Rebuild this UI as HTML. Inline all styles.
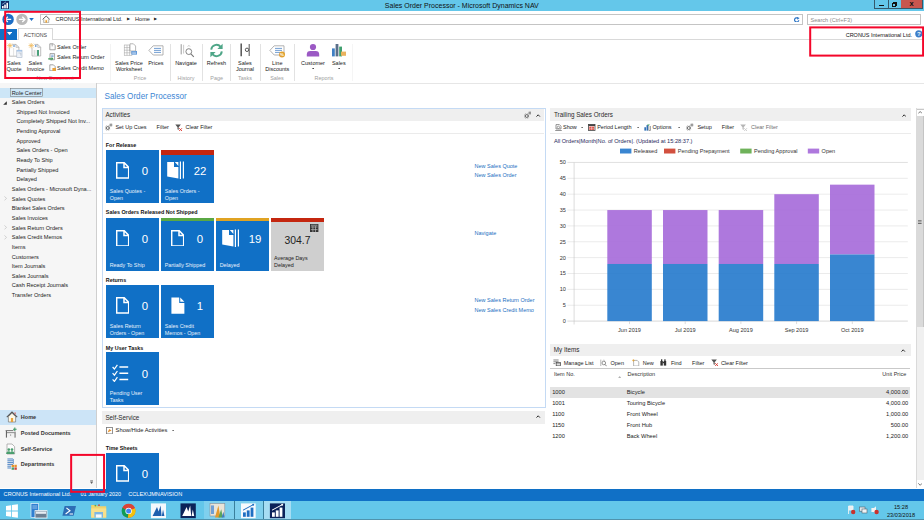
<!DOCTYPE html>
<html><head><meta charset="utf-8"><title>Sales Order Processor - Microsoft Dynamics NAV</title>
<style>
*{box-sizing:border-box;margin:0;padding:0}
html,body{width:924px;height:520px;overflow:hidden;background:#fff}
body{position:relative;font-family:"Liberation Sans",sans-serif;font-size:5.6px;color:#222;line-height:1}
.a{position:absolute;white-space:nowrap}
.t{position:absolute;white-space:nowrap;line-height:1}
#titlebar{left:0;top:0;width:924px;height:10.5px;background:#64c7ea}
#status{left:0;top:488.5px;width:924px;height:12.5px;background:#1070c6;color:#fff}
#taskbar{left:0;top:500.5px;width:924px;height:19.5px;background:#64c7ea}
#nav{left:0;top:83.4px;width:96.9px;height:405.1px;background:#f6f6f6;border-right:1px solid #cfcfcf}
.nr{position:absolute;left:0;width:96px;height:9.6px;line-height:9.6px;white-space:nowrap;color:#222;font-size:5.6px}
.tile{position:absolute;width:52.9px;height:52.9px;background:#1070c6;color:#fff}
.tile .n{position:absolute;left:28px;top:13px;width:20px;text-align:left;font-size:11.5px;color:#fff}
.tile .l{position:absolute;left:3.7px;bottom:0.6px;font-size:5.4px;line-height:7px;color:#e8f1fb;white-space:nowrap}
.tile .bar{position:absolute;left:0;top:0;width:100%;height:4.4px}
.gl{position:absolute;font-weight:bold;font-size:5.4px;color:#111;white-space:nowrap}
.ph{position:absolute;height:11px;background:#efefef;font-size:6.3px;line-height:11px;padding-left:3.5px;color:#2a2a2a;white-space:nowrap}
.lnk{position:absolute;font-size:5.5px;color:#1b6ec2;white-space:nowrap}
.rb{position:absolute;font-size:5.5px;color:#222;text-align:center;white-space:nowrap;line-height:6px}
.rg{position:absolute;font-size:5.4px;color:#a0a0a0;text-align:center;white-space:nowrap}
.sep{position:absolute;width:1px;background:#e2e2e2;top:44px;height:37px}
.tb{position:absolute;font-size:5.5px;color:#222;white-space:nowrap}
</style></head><body>

<!-- title bar -->
<div class="a" id="titlebar"></div>
<svg class="a" style="left:1px;top:1px;width:8px;height:8px" viewBox="0 0 8 8"><rect width="8" height="8" fill="#0f2c66"/><rect x="1" y="5" width="1.6" height="2.4" fill="#fff"/><rect x="3.2" y="3.6" width="1.6" height="3.8" fill="#fff"/><rect x="5.4" y="1.8" width="1.6" height="5.6" fill="#fff"/><path d="M1 3.4 L5 0.8" stroke="#9ec7ee" stroke-width="0.7"/></svg>
<div class="t" style="left:0;width:923.6px;top:1.9px;text-align:center;font-size:7px;color:#111">Sales Order Processor - Microsoft Dynamics NAV</div>
<div class="a" style="left:874.4px;top:0;width:48.6px;height:9.2px;background:#64c7ea;border:1px solid #35586a;border-top:none"></div>
<div class="a" style="left:888.3px;top:0;width:0.7px;height:8.6px;background:#35586a"></div>
<div class="a" style="left:900.7px;top:0;width:21.7px;height:8.4px;background:#c8564e"></div>
<div class="a" style="left:879px;top:5px;width:5px;height:1px;background:#111"></div>
<div class="a" style="left:892px;top:3.2px;width:4px;height:3.6px;border:1px solid #111"></div>
<div class="a" style="left:893.4px;top:2.2px;width:3.6px;height:3.6px;border:1px solid #111;border-left:none;border-bottom:none"></div>
<div class="t" style="left:909.6px;top:-0.4px;font-size:7.5px;font-weight:bold;color:#111">x</div>

<!-- address bar -->
<svg class="a" style="left:0;top:12px;width:40px;height:15px" viewBox="0 0 40 15">
<circle cx="8.1" cy="7.4" r="5.7" fill="#1c6ec6"/>
<path d="M11.2 7.4 H5.2 M7.8 4.8 L5.2 7.4 L7.8 10" stroke="#fff" stroke-width="1.3" fill="none"/>
<circle cx="22" cy="7.4" r="5.7" fill="#b9b9b9"/>
<path d="M18.9 7.4 H24.9 M22.3 4.8 L24.9 7.4 L22.3 10" stroke="#fff" stroke-width="1.3" fill="none"/>
<path d="M29.2 5.9 H33.8 L31.5 9 Z" fill="#1c6ec6"/>
</svg>
<div class="a" style="left:40.3px;top:14.2px;width:762.4px;height:10.4px;border:1px solid #c4c4c4;background:#fff"></div>
<svg class="a" style="left:41.6px;top:15px;width:8.4px;height:8.4px" viewBox="0 0 8 8"><path d="M0.6 4.2 L4 1 L7.4 4.2" stroke="#555" stroke-width="0.9" fill="none"/><path d="M1.6 4 V7.3 H6.4 V4" stroke="#999" stroke-width="0.7" fill="#fdf6e3"/><rect x="3.3" y="5" width="1.5" height="2.3" fill="#e8a33d"/></svg>
<div class="t" style="left:55.4px;top:16.6px;font-size:5.6px;color:#222;letter-spacing:-0.02px">CRONUS International Ltd.</div>
<div class="t" style="left:126.8px;top:17px;font-size:4.2px;color:#222">&#9654;</div>
<div class="t" style="left:135px;top:16.6px;font-size:5.6px;color:#222">Home</div>
<div class="t" style="left:154.3px;top:17px;font-size:4.2px;color:#222">&#9654;</div>
<svg class="a" style="left:794.4px;top:16.8px;width:5.6px;height:5.6px" viewBox="0 0 8 8"><path d="M6.8 4.6 A3 3 0 1 1 5.4 1.6" stroke="#2a73c4" stroke-width="1.7" fill="none"/><path d="M4.2 0 L8 1.6 L5 4Z" fill="#2a73c4"/></svg>
<div class="a" style="left:807.3px;top:14.2px;width:113.6px;height:10.4px;border:1px solid #c4c4c4;background:#fff"></div>
<div class="t" style="left:810.5px;top:17.5px;font-size:5.6px;color:#8a8a8a">Search (Ctrl+F3)</div>

<!-- ribbon tabs -->
<div class="a" style="left:0;top:39.4px;width:924px;height:0.9px;background:#d9d9d9"></div>
<div class="a" style="left:0;top:28.6px;width:16.8px;height:11.4px;background:#1070c6"></div>
<svg class="a" style="left:7px;top:32.2px;width:5.2px;height:3.2px" viewBox="0 0 5.4 3.2"><path d="M0 0 H5.4 L2.7 3.2Z" fill="#fff"/></svg>
<div class="a" style="left:18.1px;top:28.1px;width:34.6px;height:12.2px;border:1px solid #d9d9d9;border-bottom:none;background:#fff"></div>
<div class="t" style="left:18.1px;width:34.6px;text-align:center;top:32.5px;font-size:5.25px;color:#444">ACTIONS</div>
<div class="t" style="right:12px;top:32.7px;font-size:5.5px;color:#111">CRONUS International Ltd.</div>
<svg class="a" style="left:914.5px;top:30.3px;width:7.6px;height:7.6px" viewBox="0 0 8 8"><circle cx="4" cy="4" r="3.8" fill="#3d7ec9"/><text x="4" y="6.3" font-family="Liberation Sans, sans-serif" font-weight="bold" font-size="6.4" fill="#fff" text-anchor="middle">?</text></svg>

<!-- ribbon body -->
<div class="a" style="left:0;top:83px;width:924px;height:0.8px;background:#e6e6e6"></div>
<div class="sep" style="left:109.5px;background:#f3f3f3"></div>
<div class="sep" style="left:169.8px"></div>
<div class="sep" style="left:201.6px"></div>
<div class="sep" style="left:230.2px"></div>
<div class="sep" style="left:259.7px"></div>
<div class="sep" style="left:293.9px"></div>
<div class="sep" style="left:352px;background:#f5f5f5"></div>

<!-- big buttons: New Document -->
<svg class="a" style="left:6px;top:43px;width:17px;height:16px" viewBox="0 0 17 16"><path d="M3.3 4.6 V13.2 H12.9 V4.3 L10 1.4 H6.2" fill="#fdfdfd" stroke="#a3a3a3" stroke-width="0.7"/><path d="M10 1.4 V4.3 H12.9" fill="none" stroke="#a3a3a3" stroke-width="0.6"/><rect x="7.4" y="2" width="1.2" height="2" fill="#5b95d6"/><path d="M7.6 5 V13" stroke="#cfcfcf" stroke-width="0.6"/><rect x="10.8" y="7.2" width="5.2" height="7.2" fill="#eef2f8" stroke="#a9b6c8" stroke-width="0.6"/><rect x="10.8" y="7.2" width="5.2" height="1.3" fill="#9fc1e8"/><path d="M12.4 10 H14.8 V12.6" stroke="#aab4c2" stroke-width="0.6" fill="none"/><path d="M3.9 -0.1 V5.3 M1.2 2.6 H6.6 M1.96 0.66 L5.84 4.54 M5.84 0.66 L1.96 4.54" stroke="#f0bd62" stroke-width="0.8"/></svg>
<div class="rb" style="left:0;width:28px;top:60px">Sales<br>Quote</div>
<svg class="a" style="left:27px;top:43px;width:16px;height:16px" viewBox="0 0 16 16"><path d="M5 4.6 V13 H13.7 V4.3 L10.8 1.4 H7.4" fill="#fdfdfd" stroke="#a3a3a3" stroke-width="0.7"/><path d="M10.8 1.4 V4.3 H13.7" fill="none" stroke="#a3a3a3" stroke-width="0.6"/><rect x="8.2" y="2" width="1.2" height="2" fill="#5b95d6"/><rect x="6.6" y="7" width="1.4" height="5.6" fill="#dcdcdc"/><rect x="8.4" y="7" width="1.2" height="5.6" fill="#e6e6e6"/><rect x="10" y="7" width="2" height="5.8" fill="#4aa07a"/><path d="M4.2 -0.1 V5.3 M1.5 2.6 H6.9 M2.26 0.66 L6.14 4.54 M6.14 0.66 L2.26 4.54" stroke="#f0bd62" stroke-width="0.8"/></svg>
<div class="rb" style="left:21.5px;width:28px;top:60px">Sales<br>Invoice</div>
<!-- small buttons -->
<svg class="a" style="left:48.6px;top:43.2px;width:7px;height:7.4px" viewBox="0 0 7 7.4"><path d="M0.8 0.8 H4.4 L6.2 2.6 V6.8 H0.8Z" fill="#fcfcfc" stroke="#8e8e8e" stroke-width="0.8"/><path d="M3.2 0.8 V3.4" stroke="#8e8e8e" stroke-width="0.7"/></svg>
<div class="tb" style="left:57.1px;top:44.7px">Sales Order</div>
<svg class="a" style="left:48.4px;top:53.4px;width:7.4px;height:7.6px" viewBox="0 0 7.4 7.6"><path d="M2 0.6 H6.6 V6.8 H2Z" fill="#fcfcfc" stroke="#8e8e8e" stroke-width="0.8"/><path d="M3.2 2.2 H5.6 M3.2 3.6 H5.6" stroke="#4f86c6" stroke-width="0.7"/><path d="M0.2 5.2 H3.6 V3.8 L5.4 5.8 L3.6 7.6 V6.4 H0.2Z" fill="#3f9a58"/></svg>
<div class="tb" style="left:57.1px;top:55px">Sales Return Order</div>
<svg class="a" style="left:48.6px;top:63.6px;width:7.6px;height:7.8px" viewBox="0 0 7.6 7.8"><path d="M0.8 0.8 H4.4 L6.2 2.6 V6.8 H0.8Z" fill="#fcfcfc" stroke="#8e8e8e" stroke-width="0.8"/><rect x="3.4" y="4" width="3.8" height="3.4" fill="#e9a23b"/></svg>
<div class="tb" style="left:57.1px;top:66px">Sales Credit Memo</div>
<div class="rg" style="left:25px;width:60px;top:76px">New Document</div>

<!-- Price -->
<svg class="a" style="left:123px;top:43px;width:15px;height:15px" viewBox="0 0 15 15"><path d="M1 2 H9 M1 4.6 H9 M1 7.2 H9 M1 9.8 H9 M1 12.4 H9 M1.4 2 V12.4 M4 2 V12.4 M6.6 2 V12.4 M9 2 V12.4" stroke="#a9a9a9" stroke-width="0.6" fill="none"/><path d="M7 0.8 H10.4 L12.6 3 V8 H7Z" fill="#fff" stroke="#9a9a9a" stroke-width="0.7"/><rect x="8.4" y="8" width="5.6" height="3.6" fill="#5a94d6"/><path d="M9.2 9.2 H13.2 M9.2 10.4 H13.2" stroke="#fff" stroke-width="0.5"/></svg>
<div class="rb" style="left:109px;width:40px;top:60.4px">Sales Price<br>Worksheet</div>
<svg class="a" style="left:147.5px;top:45px;width:16px;height:11px" viewBox="0 0 16 11"><path d="M5.2 0.8 H15 V10 H5.2 L0.9 5.4Z" fill="#fff" stroke="#a0a0a0" stroke-width="0.8"/><path d="M6 3.4 H13 M6 5.4 H13 M6 7.4 H13" stroke="#4f86c6" stroke-width="0.8"/></svg>
<div class="rb" style="left:140.8px;width:30px;top:60.4px">Prices</div>
<div class="rg" style="left:120px;width:40px;top:76px">Price</div>

<!-- History -->
<svg class="a" style="left:178.5px;top:43px;width:16px;height:16px" viewBox="0 0 16 16"><path d="M2.2 1.2 V11.4" stroke="#9a9a9a" stroke-width="1"/><path d="M4.6 1.8 V10.6" stroke="#bdbdbd" stroke-width="0.8"/><circle cx="9.8" cy="8.6" r="2.9" fill="#fff" stroke="#777" stroke-width="0.9"/><path d="M11.9 10.8 L14.8 13.8" stroke="#777" stroke-width="1.1"/><path d="M8.8 3.6 L9.9 2.4 L11 3.6" stroke="#999" stroke-width="0.6" fill="none"/></svg>
<div class="rb" style="left:171px;width:30px;top:60.4px">Navigate</div>
<div class="rg" style="left:166px;width:40px;top:76px">History</div>

<!-- Page -->
<svg class="a" style="left:209px;top:43.2px;width:15px;height:15px" viewBox="0 0 15 15"><path d="M2.2 6.6 A5.3 5.3 0 0 1 11.6 3.8" stroke="#4fa688" stroke-width="1.9" fill="none"/><path d="M13.6 0.8 V6 H8.4Z" fill="#4fa688"/><path d="M12.8 8.4 A5.3 5.3 0 0 1 3.4 11.2" stroke="#4fa688" stroke-width="1.9" fill="none"/><path d="M1.4 14.2 V9 H6.6Z" fill="#4fa688"/></svg>
<div class="rb" style="left:201.4px;width:30px;top:60.4px">Refresh</div>
<div class="rg" style="left:196.6px;width:40px;top:76px">Page</div>

<!-- Tasks -->
<svg class="a" style="left:238px;top:43px;width:14px;height:16px" viewBox="0 0 14 16"><path d="M3.2 0.6 V13.2" stroke="#555" stroke-width="1.5"/><path d="M11.2 1 V13" stroke="#666" stroke-width="1.1"/><circle cx="9" cy="6.8" r="1.7" fill="none" stroke="#555" stroke-width="1"/></svg>
<div class="rb" style="left:230px;width:30px;top:60.4px">Sales<br>Journal</div>
<div class="rg" style="left:225px;width:40px;top:76px">Tasks</div>

<!-- Sales -->
<svg class="a" style="left:268.5px;top:45px;width:17px;height:13px" viewBox="0 0 17 13"><path d="M5.2 0.8 H15 V10 H5.2 L0.9 5.4Z" fill="#fff" stroke="#a0a0a0" stroke-width="0.8"/><path d="M6 3.4 H13 M6 5.4 H13 M6 7.4 H11" stroke="#4f86c6" stroke-width="0.8"/><circle cx="13" cy="9.4" r="3" fill="#e0a030"/><text x="13" y="11" font-size="4.4" font-family="Liberation Sans, sans-serif" font-weight="bold" fill="#fff" text-anchor="middle">%</text></svg>
<div class="rb" style="left:262.3px;width:30px;top:60.4px">Line<br>Discounts</div>
<div class="rg" style="left:257px;width:40px;top:76px">Sales</div>

<!-- Reports -->
<svg class="a" style="left:306px;top:43px;width:14px;height:15px" viewBox="0 0 14 15"><circle cx="7" cy="4" r="3.1" fill="#9b59c4"/><path d="M0.8 13.6 V11.4 Q0.8 8 4.4 8 H9.6 Q13.2 8 13.2 11.4 V13.6Z" fill="#9b59c4"/></svg>
<div class="rb" style="left:298px;width:30px;top:60.4px">Customer</div>
<svg class="a" style="left:311.9px;top:67.9px;width:2.4px;height:1.5px" viewBox="0 0 3 2"><path d="M0 0 H3 L1.5 2Z" fill="#333"/></svg>
<svg class="a" style="left:331px;top:43px;width:16px;height:15px" viewBox="0 0 16 15"><rect x="1" y="5.4" width="2.8" height="8" fill="#3f7fc4"/><rect x="4.6" y="1" width="2.8" height="12.4" fill="#5a6f8a"/><rect x="8.2" y="3.6" width="2.8" height="9.8" fill="#3f9f6e"/><rect x="10" y="8.6" width="5" height="4.2" fill="#e9b25e"/></svg>
<div class="rb" style="left:323.8px;width:30px;top:60.4px">Sales</div>
<svg class="a" style="left:337.6px;top:67.9px;width:2.4px;height:1.5px" viewBox="0 0 3 2"><path d="M0 0 H3 L1.5 2Z" fill="#333"/></svg>
<div class="rg" style="left:304px;width:40px;top:76px">Reports</div>
<!-- nav pane -->
<div class="a" id="nav"></div>
<div class="a" style="left:0;top:88.2px;width:96px;height:9.6px;background:#cde6f7"></div>
<svg class="a" style="left:10px;top:88.4px;width:33px;height:9.4px" viewBox="0 0 33 9.4"><rect x="0.5" y="0.6" width="31.8" height="8" fill="none" stroke="#6a6a6a" stroke-width="0.5"/></svg>
<div class="nr" style="top:88.50px;padding-left:11.8px">Role Center</div>
<div class="nr" style="top:98.15px;padding-left:11.8px">Sales Orders</div>
<svg class="a" style="left:3.4px;top:100.55px;width:4px;height:4px" viewBox="0 0 4 4"><path d="M3.8 0.2 V3.8 H0.2Z" fill="#333"/></svg>
<div class="nr" style="top:107.80px;padding-left:16.4px">Shipped Not Invoiced</div>
<div class="nr" style="top:117.44px;padding-left:16.4px">Completely Shipped Not Inv...</div>
<div class="nr" style="top:127.09px;padding-left:16.4px">Pending Approval</div>
<div class="nr" style="top:136.74px;padding-left:16.4px">Approved</div>
<div class="nr" style="top:146.39px;padding-left:16.4px">Sales Orders - Open</div>
<div class="nr" style="top:156.04px;padding-left:16.4px">Ready To Ship</div>
<div class="nr" style="top:165.68px;padding-left:16.4px">Partially Shipped</div>
<div class="nr" style="top:175.33px;padding-left:16.4px">Delayed</div>
<div class="nr" style="top:184.98px;padding-left:11.8px">Sales Orders - Microsoft Dyna...</div>
<div class="nr" style="top:194.63px;padding-left:11.8px">Sales Quotes</div>
<svg class="a" style="left:4px;top:196.43px;width:3px;height:4.8px" viewBox="0 0 3 4.8"><path d="M0.5 0.4 L2.5 2.4 L0.5 4.4" stroke="#bdbdbd" stroke-width="0.7" fill="none"/></svg>
<div class="nr" style="top:204.28px;padding-left:11.8px">Blanket Sales Orders</div>
<div class="nr" style="top:213.92px;padding-left:11.8px">Sales Invoices</div>
<div class="nr" style="top:223.57px;padding-left:11.8px">Sales Return Orders</div>
<svg class="a" style="left:4px;top:225.37px;width:3px;height:4.8px" viewBox="0 0 3 4.8"><path d="M0.5 0.4 L2.5 2.4 L0.5 4.4" stroke="#bdbdbd" stroke-width="0.7" fill="none"/></svg>
<div class="nr" style="top:233.22px;padding-left:11.8px">Sales Credit Memos</div>
<svg class="a" style="left:4px;top:235.02px;width:3px;height:4.8px" viewBox="0 0 3 4.8"><path d="M0.5 0.4 L2.5 2.4 L0.5 4.4" stroke="#bdbdbd" stroke-width="0.7" fill="none"/></svg>
<div class="nr" style="top:242.87px;padding-left:11.8px">Items</div>
<div class="nr" style="top:252.52px;padding-left:11.8px">Customers</div>
<div class="nr" style="top:262.16px;padding-left:11.8px">Item Journals</div>
<div class="nr" style="top:271.81px;padding-left:11.8px">Sales Journals</div>
<div class="nr" style="top:281.46px;padding-left:11.8px">Cash Receipt Journals</div>
<div class="nr" style="top:291.11px;padding-left:11.8px">Transfer Orders</div>
<div class="a" style="left:0;top:410px;width:96px;height:14.9px;background:#cce4f7"></div>
<div class="t" style="left:20.8px;top:414.50px;font-size:5.5px;font-weight:bold;color:#333">Home</div>
<div class="t" style="left:20.8px;top:430.90px;font-size:5.5px;font-weight:bold;color:#333">Posted Documents</div>
<div class="t" style="left:20.8px;top:446.50px;font-size:5.5px;font-weight:bold;color:#333">Self-Service</div>
<div class="t" style="left:20.8px;top:462.30px;font-size:5.5px;font-weight:bold;color:#333">Departments</div>
<svg class="a" style="left:5.6px;top:411.2px;width:12px;height:12px" viewBox="0 0 12 12"><path d="M2.4 5.6 V11 H9.6 V5.6 L6 2.2Z" fill="#fdf7e6" stroke="#777" stroke-width="0.7"/><path d="M0.8 6.2 L6 1 L11.2 6.2" stroke="#555" stroke-width="1.1" fill="none"/><rect x="4.9" y="7" width="2.2" height="4" fill="#e8a33d"/><rect x="8.6" y="1.4" width="1" height="2" fill="#d9534a"/></svg>
<svg class="a" style="left:5.4px;top:426.6px;width:12px;height:12px" viewBox="0 0 12 12"><path d="M1.4 4 V10.6 M10 4.6 V10.6" stroke="#555" stroke-width="1"/><path d="M0.6 3.6 H8.4 M2 5.8 H9.4" stroke="#666" stroke-width="0.9"/><rect x="2.2" y="6.4" width="7" height="4" fill="#f2f2f2"/><rect x="5.2" y="7.6" width="0.9" height="0.9" fill="#555"/><path d="M9.8 0.4 V4 M8 2.2 H11.6" stroke="#3f9a68" stroke-width="1.1"/></svg>
<svg class="a" style="left:5.4px;top:442.6px;width:12px;height:12px" viewBox="0 0 12 12"><path d="M2 1 H7 L9.6 3.6 V11 H2Z" fill="#fcfcfc" stroke="#9a9a9a" stroke-width="0.7"/><circle cx="3.8" cy="6.6" r="1.3" fill="#4a9e6e"/><circle cx="7" cy="6.6" r="1.3" fill="#4a9e6e"/><path d="M1.2 11 Q1.2 8.2 3.8 8.2 Q5.4 8.2 5.4 9.4 Q5.4 8.2 7 8.2 Q9.4 8.2 9.4 11Z" fill="#4a9e6e"/></svg>
<svg class="a" style="left:5.8px;top:458px;width:12px;height:12.4px" viewBox="0 0 12 12.4"><path d="M1.4 1 H7 M1.4 2.8 H7 M1.4 4.6 H7 M1.4 6.4 H7 M1.4 8.2 H5 M1.4 10 H5" stroke="#3c78c0" stroke-width="0.9"/><path d="M7.4 1 V6" stroke="#3c78c0" stroke-width="0.7"/><rect x="5.6" y="6.8" width="2.4" height="2.2" fill="#e8912a"/><rect x="8.4" y="6.8" width="2.4" height="2.2" fill="#e8912a"/><rect x="5.6" y="9.4" width="2.4" height="2.4" fill="#4a9e6e"/><rect x="8.4" y="9.4" width="2.4" height="2.4" fill="#c9453b"/></svg>
<svg class="a" style="left:90.2px;top:479.6px;width:3.2px;height:4px" viewBox="0 0 3.2 4"><path d="M0.2 0.5 H3 M0.2 1.6 H3" stroke="#555" stroke-width="0.5"/><path d="M0.3 2.3 H2.9 L1.6 3.8Z" fill="#333"/></svg>
<!-- main content -->
<div class="t" style="left:104.5px;top:92.6px;font-size:8.15px;color:#3c86d4">Sales Order Processor</div>
<div class="a" style="left:102.4px;top:108.1px;width:443.2px;height:299.6px;border:1px solid #c4daf4;background:#fff"></div>
<div class="ph" style="left:103px;top:109.1px;width:441.2px;height:11.5px;line-height:11.4px;padding-left:2.4px">Activities</div>
<div class="a" style="left:103.2px;top:133px;width:441px;height:0.7px;background:#ebebeb"></div>
<svg class="a" style="left:105.4px;top:123.4px;width:7.6px;height:7.6px" viewBox="0 0 7.6 7.6"><circle cx="2.7" cy="5" r="1.35" fill="none" stroke="#444" stroke-width="0.6"/><path d="M3.99 5.54 L5.10 5.99 M3.24 6.29 L3.69 7.40 M2.16 6.29 L1.71 7.40 M1.41 5.54 L0.30 5.99 M1.41 4.46 L0.30 4.01 M2.16 3.71 L1.71 2.60 M3.24 3.71 L3.69 2.60 M3.99 4.46 L5.10 4.01 " stroke="#444" stroke-width="0.65"/><circle cx="5.9" cy="2" r="0.7" fill="none" stroke="#555" stroke-width="0.45"/><path d="M6.55 2.27 L7.38 2.61 M6.17 2.65 L6.51 3.48 M5.63 2.65 L5.29 3.48 M5.25 2.27 L4.42 2.61 M5.25 1.73 L4.42 1.39 M5.63 1.35 L5.29 0.52 M6.17 1.35 L6.51 0.52 M6.55 1.73 L7.38 1.39 " stroke="#555" stroke-width="0.5"/></svg>
<div class="tb" style="left:115.4px;top:124.8px">Set Up Cues</div>
<div class="tb" style="left:156.6px;top:124.8px">Filter</div>
<svg class="a" style="left:175.4px;top:123.8px;width:7.4px;height:7.4px" viewBox="0 0 7.4 7.4"><path d="M0.3 0.6 H5.9 L3.7 3.2 V6 L2.5 5.2 V3.2Z" fill="#555"/><path d="M4.2 4.2 L7 7 M7 4.2 L4.2 7" stroke="#d9362b" stroke-width="0.9"/></svg>
<div class="tb" style="left:185.5px;top:124.8px">Clear Filter</div>
<svg class="a" style="left:523.6px;top:111px;width:7.6px;height:7.6px" viewBox="0 0 7.6 7.6"><circle cx="2.7" cy="5" r="1.35" fill="none" stroke="#444" stroke-width="0.6"/><path d="M3.99 5.54 L5.10 5.99 M3.24 6.29 L3.69 7.40 M2.16 6.29 L1.71 7.40 M1.41 5.54 L0.30 5.99 M1.41 4.46 L0.30 4.01 M2.16 3.71 L1.71 2.60 M3.24 3.71 L3.69 2.60 M3.99 4.46 L5.10 4.01 " stroke="#444" stroke-width="0.65"/><circle cx="5.9" cy="2" r="0.7" fill="none" stroke="#555" stroke-width="0.45"/><path d="M6.55 2.27 L7.38 2.61 M6.17 2.65 L6.51 3.48 M5.63 2.65 L5.29 3.48 M5.25 2.27 L4.42 2.61 M5.25 1.73 L4.42 1.39 M5.63 1.35 L5.29 0.52 M6.17 1.35 L6.51 0.52 M6.55 1.73 L7.38 1.39 " stroke="#555" stroke-width="0.5"/></svg>
<svg class="a" style="left:536.4px;top:113.6px;width:4.4px;height:3px" viewBox="0 0 4.4 3"><path d="M0.5 2.6 L2.2 0.8 L3.9 2.6" stroke="#222" stroke-width="0.95" fill="none"/></svg>
<div class="gl" style="left:105.8px;top:143px">For Release</div>
<div class="tile" style="left:106.0px;top:149.9px;height:52.9px"><svg class="a" style="left:10px;top:12.2px;width:13.4px;height:16.6px" viewBox="0 0 13.4 16.6"><path d="M0.7 0.7 H8.2 L12.7 5.2 V15.9 H0.7Z M8 0.9 V5.4 H12.5" fill="none" stroke="#fff" stroke-width="1.5"/></svg><div class="t" style="left:24px;width:30px;text-align:center;top:16.4px;font-size:11.4px;color:#fff">0</div><div class="l" style="bottom:0.6px">Sales Quotes -<br>Open</div></div>
<div class="tile" style="left:161.0px;top:149.9px;height:52.9px"><div class="bar" style="background:#c4260f;height:4.8px"></div><svg class="a" style="left:5.8px;top:11.6px;width:18px;height:18.6px" viewBox="0 0 18 18.6"><path d="M0.2 1 H7 V6 H11.4 V17.6 L0.2 15.6Z" fill="#fff"/><path d="M7.8 1 H11.4 V5 Z" fill="#fff"/><path d="M13.4 0.4 V18 M16.4 0.6 V17.6" stroke="#fff" stroke-width="1.2"/></svg><div class="t" style="left:24px;width:30px;text-align:center;top:16.4px;font-size:11.4px;color:#fff">22</div><div class="l" style="bottom:0.6px">Sales Orders -<br>Open</div></div>
<div class="gl" style="left:105.8px;top:210.3px">Sales Orders Released Not Shipped</div>
<div class="tile" style="left:106.0px;top:217.7px;height:52.9px"><svg class="a" style="left:10px;top:12.2px;width:13.4px;height:16.6px" viewBox="0 0 13.4 16.6"><path d="M0.7 0.7 H8.2 L12.7 5.2 V15.9 H0.7Z M8 0.9 V5.4 H12.5" fill="none" stroke="#fff" stroke-width="1.5"/></svg><div class="t" style="left:24px;width:30px;text-align:center;top:16.4px;font-size:11.4px;color:#fff">0</div><div class="l" style="bottom:1.5px">Ready To Ship</div></div>
<div class="tile" style="left:161.0px;top:217.7px;height:52.9px"><div class="bar" style="background:#5aa844;height:3.0px"></div><svg class="a" style="left:10px;top:12.2px;width:13.4px;height:16.6px" viewBox="0 0 13.4 16.6"><path d="M0.7 0.7 H8.2 L12.7 5.2 V15.9 H0.7Z M8 0.9 V5.4 H12.5" fill="none" stroke="#fff" stroke-width="1.5"/></svg><div class="t" style="left:24px;width:30px;text-align:center;top:16.4px;font-size:11.4px;color:#fff">0</div><div class="l" style="bottom:1.5px">Partially Shipped</div></div>
<div class="tile" style="left:216.0px;top:217.7px;height:52.9px"><div class="bar" style="background:#e0a323;height:3.8px"></div><svg class="a" style="left:5.8px;top:11.6px;width:18px;height:18.6px" viewBox="0 0 18 18.6"><path d="M0.2 1 H7 V6 H11.4 V17.6 L0.2 15.6Z" fill="#fff"/><path d="M7.8 1 H11.4 V5 Z" fill="#fff"/><path d="M13.4 0.4 V18 M16.4 0.6 V17.6" stroke="#fff" stroke-width="1.2"/></svg><div class="t" style="left:24px;width:30px;text-align:center;top:16.4px;font-size:11.4px;color:#fff">19</div><div class="l" style="bottom:1.5px">Delayed</div></div>
<div class="tile" style="left:271.0px;top:217.7px;height:52.9px;background:#cfcfcf;color:#222"><div class="bar" style="background:#c4260f;height:4.7px"></div><svg class="a" style="left:39.4px;top:6.2px;width:8.4px;height:8.6px" viewBox="0 0 8.4 8.6"><rect width="8.4" height="8.6" fill="#333"/><path d="M0.8 3 H7.6 M0.8 5.6 H7.6 M2.9 2.2 V8 M5.5 2.2 V8" stroke="#bbb" stroke-width="0.7"/><rect x="0.9" y="0.7" width="6.6" height="1" fill="#999"/></svg><div class="t" style="left:0;width:52.9px;text-align:center;top:18px;font-size:10.4px;color:#222">304.7</div><div class="l" style="color:#222;left:3px;bottom:1.5px">Average Days<br>Delayed</div></div>
<div class="gl" style="left:105.8px;top:277.9px">Returns</div>
<div class="tile" style="left:106.0px;top:285.0px;height:52.9px"><svg class="a" style="left:10px;top:12.2px;width:13.4px;height:16.6px" viewBox="0 0 13.4 16.6"><path d="M0.7 0.7 H8.2 L12.7 5.2 V15.9 H0.7Z M8 0.9 V5.4 H12.5" fill="none" stroke="#fff" stroke-width="1.5"/></svg><div class="t" style="left:24px;width:30px;text-align:center;top:16.4px;font-size:11.4px;color:#fff">0</div><div class="l" style="bottom:0.6px">Sales Return<br>Orders - Open</div></div>
<div class="tile" style="left:161.0px;top:285.0px;height:52.9px"><svg class="a" style="left:10.2px;top:11.9px;width:13.8px;height:17.2px" viewBox="0 0 13.4 16.6"><path d="M0.4 0.4 H8 V5.8 H13 V16.2 H0.4Z" fill="#fff"/><path d="M9 0.4 L13 4.6 H9Z" fill="#fff"/></svg><div class="t" style="left:24px;width:30px;text-align:center;top:16.4px;font-size:11.4px;color:#fff">1</div><div class="l" style="bottom:0.6px">Sales Credit<br>Memos - Open</div></div>
<div class="gl" style="left:105.8px;top:345.5px">My User Tasks</div>
<div class="tile" style="left:106.0px;top:352.2px;height:52.9px"><svg class="a" style="left:6.4px;top:11.6px;width:18px;height:18px" viewBox="0 0 18 18"><path d="M7.4 3 H16.2 M7.4 9.2 H16.2 M7.4 15.4 H16.2" stroke="#fff" stroke-width="1.5"/><path d="M0.6 3 L2.4 5 L5.4 0.8 M0.6 9.2 L2.4 11.2 L5.4 7 M0.6 15.4 L2.4 17.4 L5.4 13.2" stroke="#fff" stroke-width="1.2" fill="none"/></svg><div class="t" style="left:24px;width:30px;text-align:center;top:16.4px;font-size:11.4px;color:#fff">0</div><div class="l" style="bottom:0.6px">Pending User<br>Tasks</div></div>
<div class="lnk" style="left:474.6px;top:163.6px">New Sales Quote</div>
<div class="lnk" style="left:474.6px;top:173.2px">New Sales Order</div>
<div class="lnk" style="left:474.6px;top:231.0px">Navigate</div>
<div class="lnk" style="left:474.6px;top:298.4px">New Sales Return Order</div>
<div class="lnk" style="left:474.6px;top:308.2px">New Sales Credit Memo</div>
<div class="ph" style="left:102.4px;top:410.9px;width:442.8px;height:12.8px;line-height:13.8px;padding-left:3px">Self-Service</div>
<svg class="a" style="left:536.4px;top:415.4px;width:4.4px;height:3px" viewBox="0 0 4.4 3"><path d="M0.5 2.6 L2.2 0.8 L3.9 2.6" stroke="#222" stroke-width="0.95" fill="none"/></svg>
<svg class="a" style="left:105.6px;top:426.6px;width:7px;height:7.4px" viewBox="0 0 7 7.4"><rect x="0.5" y="0.5" width="6" height="6.4" fill="#fff" stroke="#777" stroke-width="0.8"/><path d="M1.6 5.6 L3.2 2 L5.6 3.6Z" fill="#e8912a"/></svg>
<div class="tb" style="left:115.6px;top:427.9px;font-size:5.75px">Show/Hide Activities</div>
<svg class="a" style="left:171.6px;top:429.6px;width:2.4px;height:1.6px" viewBox="0 0 3 2"><path d="M0 0 H3 L1.5 2Z" fill="#666"/></svg>
<div class="gl" style="left:105.8px;top:446px">Time Sheets</div>
<div class="tile" style="left:106.0px;top:452.9px;height:36px"><svg class="a" style="left:10px;top:12.2px;width:13.4px;height:16.6px" viewBox="0 0 13.4 16.6"><path d="M0.7 0.7 H8.2 L12.7 5.2 V15.9 H0.7Z M8 0.9 V5.4 H12.5" fill="none" stroke="#fff" stroke-width="1.5"/></svg><div class="t" style="left:24px;width:30px;text-align:center;top:16.4px;font-size:11.4px;color:#fff">0</div><div class="l" style="bottom:0.6px"></div></div>
<!-- right column -->
<div class="ph" style="left:549.9px;top:108.3px;width:361px;height:12.4px;line-height:13.6px;padding-left:4.1px">Trailing Sales Orders</div>
<svg class="a" style="left:901.5px;top:113.6px;width:4.4px;height:3px" viewBox="0 0 4.4 3"><path d="M0.5 2.6 L2.2 0.8 L3.9 2.6" stroke="#222" stroke-width="0.95" fill="none"/></svg>
<div class="a" style="left:549.9px;top:132.8px;width:361.3px;height:0.7px;background:#ebebeb"></div>
<svg class="a" style="left:554.6px;top:123.6px;width:7px;height:7.4px" viewBox="0 0 7 7.4"><path d="M1 0.6 H4.4 L6 2.2 V5 H1Z" fill="#fff" stroke="#666" stroke-width="0.7"/><path d="M0.2 6.8 H6.8" stroke="#444" stroke-width="0.8"/><circle cx="3.4" cy="3.4" r="1.2" fill="none" stroke="#666" stroke-width="0.6"/></svg>
<div class="tb" style="left:563px;top:125px">Show</div>
<svg class="a" style="left:581px;top:126.6px;width:2.4px;height:1.6px" viewBox="0 0 3 2"><path d="M0 0 H3 L1.5 2Z" fill="#666"/></svg>
<svg class="a" style="left:588.2px;top:123.8px;width:7.4px;height:7px" viewBox="0 0 7.4 7"><rect x="0.4" y="0.4" width="6.6" height="6.2" fill="#fff" stroke="#444" stroke-width="0.8"/><rect x="0.4" y="0.4" width="6.6" height="1.6" fill="#444"/><rect x="1.3" y="2.6" width="4.8" height="3.2" fill="#d9362b"/><path d="M1.3 4.2 H6.1 M3.7 2.6 V5.8" stroke="#fff" stroke-width="0.5"/></svg>
<div class="tb" style="left:597.2px;top:125px">Period Length</div>
<svg class="a" style="left:636.6px;top:126.6px;width:2.4px;height:1.6px" viewBox="0 0 3 2"><path d="M0 0 H3 L1.5 2Z" fill="#666"/></svg>
<svg class="a" style="left:644px;top:123.6px;width:6.8px;height:7.2px" viewBox="0 0 7.6 7.6"><rect x="0.4" y="3.4" width="1.8" height="3.8" fill="#2f6fb5"/><rect x="2.8" y="1" width="1.8" height="6.2" fill="#2f6fb5"/><path d="M5.4 2 V7 H7.2 V2" fill="none" stroke="#555" stroke-width="0.6"/><path d="M3.4 0.4 L6.6 0.4 L5 2Z" fill="#3f9a58"/></svg>
<div class="tb" style="left:652.6px;top:125px">Options</div>
<svg class="a" style="left:678px;top:126.6px;width:2.4px;height:1.6px" viewBox="0 0 3 2"><path d="M0 0 H3 L1.5 2Z" fill="#666"/></svg>
<svg class="a" style="left:686.4px;top:123.2px;width:7.6px;height:7.6px" viewBox="0 0 7.6 7.6"><circle cx="2.7" cy="5" r="1.35" fill="none" stroke="#444" stroke-width="0.6"/><path d="M3.99 5.54 L5.10 5.99 M3.24 6.29 L3.69 7.40 M2.16 6.29 L1.71 7.40 M1.41 5.54 L0.30 5.99 M1.41 4.46 L0.30 4.01 M2.16 3.71 L1.71 2.60 M3.24 3.71 L3.69 2.60 M3.99 4.46 L5.10 4.01 " stroke="#444" stroke-width="0.65"/><circle cx="5.9" cy="2" r="0.7" fill="none" stroke="#555" stroke-width="0.45"/><path d="M6.55 2.27 L7.38 2.61 M6.17 2.65 L6.51 3.48 M5.63 2.65 L5.29 3.48 M5.25 2.27 L4.42 2.61 M5.25 1.73 L4.42 1.39 M5.63 1.35 L5.29 0.52 M6.17 1.35 L6.51 0.52 M6.55 1.73 L7.38 1.39 " stroke="#555" stroke-width="0.5"/></svg>
<div class="tb" style="left:697.4px;top:125px">Setup</div>
<div class="tb" style="left:721.8px;top:125px">Filter</div>
<svg class="a" style="left:740.4px;top:123.6px;width:7.4px;height:7.4px" viewBox="0 0 7.4 7.4"><path d="M0.3 0.6 H5.9 L3.7 3.2 V6 L2.5 5.2 V3.2Z" fill="#b5b5b5"/><path d="M4.2 4.2 L7 7 M7 4.2 L4.2 7" stroke="#c9c9c9" stroke-width="0.9"/></svg>
<div class="tb" style="left:751px;top:125px;color:#707070">Clear Filter</div>
<div class="t" style="left:553.9px;top:138.6px;font-size:5.65px;color:#1f2a5c">All Orders|Month|No. of Orders|. (Updated at 15:28:37.)</div>
<svg class="a" style="left:546px;top:140px;width:370px;height:200px" viewBox="0 0 370 200" font-family="Liberation Sans, sans-serif" font-size="5.55" fill="#333"><rect x="74.0" y="8.6" width="11.4" height="4.9" fill="#3a86d1"/><text x="87.8" y="13.0">Released</text><rect x="118.0" y="8.6" width="11.4" height="4.9" fill="#d2503f"/><text x="131.8" y="13.0">Pending Prepayment</text><rect x="194.2" y="8.6" width="11.4" height="4.9" fill="#6fb25a"/><text x="208.0" y="13.0">Pending Approval</text><rect x="261.8" y="8.6" width="11.4" height="4.9" fill="#ae78dd"/><text x="275.6" y="13.0">Open</text><path d="M21.4 181.10 H361.8" stroke="#bdbdbd" stroke-width="0.6"/><text x="19.8" y="183.00" text-anchor="end">0</text><path d="M21.4 165.24 H361.8" stroke="#dddddd" stroke-width="0.6"/><text x="19.8" y="167.14" text-anchor="end">5</text><path d="M21.4 149.37 H361.8" stroke="#dddddd" stroke-width="0.6"/><text x="19.8" y="151.27" text-anchor="end">10</text><path d="M21.4 133.50 H361.8" stroke="#dddddd" stroke-width="0.6"/><text x="19.8" y="135.41" text-anchor="end">15</text><path d="M21.4 117.64 H361.8" stroke="#dddddd" stroke-width="0.6"/><text x="19.8" y="119.54" text-anchor="end">20</text><path d="M21.4 101.78 H361.8" stroke="#dddddd" stroke-width="0.6"/><text x="19.8" y="103.68" text-anchor="end">25</text><path d="M21.4 85.91 H361.8" stroke="#dddddd" stroke-width="0.6"/><text x="19.8" y="87.81" text-anchor="end">30</text><path d="M21.4 70.05 H361.8" stroke="#dddddd" stroke-width="0.6"/><text x="19.8" y="71.95" text-anchor="end">35</text><path d="M21.4 54.18 H361.8" stroke="#dddddd" stroke-width="0.6"/><text x="19.8" y="56.08" text-anchor="end">40</text><path d="M21.4 38.32 H361.8" stroke="#dddddd" stroke-width="0.6"/><text x="19.8" y="40.22" text-anchor="end">45</text><path d="M21.4 22.45 H361.8" stroke="#cccccc" stroke-width="0.6"/><text x="19.8" y="24.35" text-anchor="end">50</text><path d="M28.1 22.5 V184.5" stroke="#c4c4c4" stroke-width="0.6"/><rect x="61.3" y="70.05" width="44.5" height="53.94" fill="#a569d9" fill-opacity="0.9"/><rect x="61.3" y="123.99" width="44.5" height="57.11" fill="#2479cc" fill-opacity="0.9"/><text x="83.5" y="191.8" text-anchor="middle">Jun 2019</text><path d="M83.5 181.1 v3" stroke="#c4c4c4" stroke-width="0.6"/><rect x="117.0" y="70.05" width="44.5" height="53.94" fill="#a569d9" fill-opacity="0.9"/><rect x="117.0" y="123.99" width="44.5" height="57.11" fill="#2479cc" fill-opacity="0.9"/><text x="139.2" y="191.8" text-anchor="middle">Jul 2019</text><path d="M139.2 181.1 v3" stroke="#c4c4c4" stroke-width="0.6"/><rect x="172.7" y="70.05" width="44.5" height="53.94" fill="#a569d9" fill-opacity="0.9"/><rect x="172.7" y="123.99" width="44.5" height="57.11" fill="#2479cc" fill-opacity="0.9"/><text x="194.9" y="191.8" text-anchor="middle">Aug 2019</text><path d="M194.9 181.1 v3" stroke="#c4c4c4" stroke-width="0.6"/><rect x="228.3" y="54.18" width="44.5" height="69.81" fill="#a569d9" fill-opacity="0.9"/><rect x="228.3" y="123.99" width="44.5" height="57.11" fill="#2479cc" fill-opacity="0.9"/><text x="250.6" y="191.8" text-anchor="middle">Sep 2019</text><path d="M250.6 181.1 v3" stroke="#c4c4c4" stroke-width="0.6"/><rect x="284.0" y="44.66" width="44.5" height="69.81" fill="#a569d9" fill-opacity="0.9"/><rect x="284.0" y="114.47" width="44.5" height="66.63" fill="#2479cc" fill-opacity="0.9"/><text x="306.3" y="191.8" text-anchor="middle">Oct 2019</text><path d="M306.3 181.1 v3" stroke="#c4c4c4" stroke-width="0.6"/></svg>
<div class="ph" style="left:549.9px;top:344.2px;width:361px;height:11.5px;line-height:12.6px;padding-left:3.9px">My Items</div>
<svg class="a" style="left:901.4px;top:349.2px;width:4.4px;height:3px" viewBox="0 0 4.4 3"><path d="M0.5 2.6 L2.2 0.8 L3.9 2.6" stroke="#222" stroke-width="0.95" fill="none"/></svg>
<svg class="a" style="left:553px;top:359px;width:8px;height:7.4px" viewBox="0 0 8 7.4"><path d="M0.4 1 H5.6 M0.4 2.8 H5.6 M0.4 4.6 H2.4" stroke="#555" stroke-width="0.7"/><rect x="3.2" y="3.6" width="4.4" height="3.2" fill="#fff" stroke="#444" stroke-width="0.7"/><path d="M3.2 4.8 H7.6" stroke="#444" stroke-width="0.6"/></svg>
<div class="tb" style="left:563.7px;top:360.5px">Manage List</div>
<svg class="a" style="left:599.6px;top:358.8px;width:7px;height:7.8px" viewBox="0 0 7 7.8"><path d="M0.8 0.6 V7" stroke="#999" stroke-width="0.7"/><circle cx="3.8" cy="4" r="1.8" fill="#fff" stroke="#666" stroke-width="0.7"/><path d="M5 5.4 L6.6 7.2" stroke="#666" stroke-width="0.8"/><path d="M3 1.6 L3.8 0.8 L4.6 1.6" stroke="#888" stroke-width="0.5" fill="none"/></svg>
<div class="tb" style="left:610.5px;top:360.5px">Open</div>
<svg class="a" style="left:632.4px;top:358.8px;width:7.6px;height:7.6px" viewBox="0 0 7.6 7.6"><path d="M1.6 1.4 H5.2 L6.8 3 V7 H1.6Z" fill="#fff" stroke="#999" stroke-width="0.7"/><path d="M1.4 0.2 V2.6 M0.2 1.4 H2.6" stroke="#e8a02a" stroke-width="0.7"/></svg>
<div class="tb" style="left:642.8px;top:360.5px">New</div>
<svg class="a" style="left:660px;top:359px;width:6.6px;height:7px" viewBox="0 0 6.6 7"><rect x="0.4" y="2" width="2.4" height="4.6" fill="#333"/><rect x="3.8" y="2" width="2.4" height="4.6" fill="#333"/><rect x="1" y="0.3" width="1.3" height="2" fill="#333"/><rect x="4.3" y="0.3" width="1.3" height="2" fill="#333"/><rect x="2.6" y="2.8" width="1.4" height="1.4" fill="#333"/></svg>
<div class="tb" style="left:670.9px;top:360.5px">Find</div>
<div class="tb" style="left:692.1px;top:360.5px">Filter</div>
<svg class="a" style="left:710.8px;top:359px;width:7.4px;height:7.4px" viewBox="0 0 7.4 7.4"><path d="M0.3 0.6 H5.9 L3.7 3.2 V6 L2.5 5.2 V3.2Z" fill="#555"/><path d="M4.2 4.2 L7 7 M7 4.2 L4.2 7" stroke="#d9362b" stroke-width="0.9"/></svg>
<div class="tb" style="left:720.9px;top:360.5px">Clear Filter</div>
<div class="a" style="left:549.9px;top:368px;width:360px;height:0.8px;background:#c9c9c9"></div>
<div class="tb" style="left:554px;top:372.4px;color:#333">Item No.</div>
<svg class="a" style="left:618px;top:376px;width:3.4px;height:2.2px" viewBox="0 0 3.4 2.2"><path d="M0 2.2 L1.7 0 L3.4 2.2Z" fill="#b0b0b0"/></svg>
<div class="tb" style="left:627.6px;top:372.4px;color:#333">Description</div>
<div class="tb" style="right:17.8px;top:372.4px;color:#333">Unit Price</div>
<div class="a" style="left:549.9px;top:387.1px;width:360px;height:10.5px;background:#e3e3e3"></div>
<div class="tb" style="left:552.2px;top:389.8px;font-size:5.7px">1000</div><div class="tb" style="left:626.8px;top:389.8px;font-size:5.7px">Bicycle</div><div class="tb" style="right:15.8px;top:389.8px;font-size:5.7px">4,000.00</div>
<div class="tb" style="left:552.2px;top:400.8px;font-size:5.7px">1001</div><div class="tb" style="left:626.8px;top:400.8px;font-size:5.7px">Touring Bicycle</div><div class="tb" style="right:15.8px;top:400.8px;font-size:5.7px">4,000.00</div>
<div class="tb" style="left:552.2px;top:411.8px;font-size:5.7px">1100</div><div class="tb" style="left:626.8px;top:411.8px;font-size:5.7px">Front Wheel</div><div class="tb" style="right:15.8px;top:411.8px;font-size:5.7px">1,000.00</div>
<div class="tb" style="left:552.2px;top:422.8px;font-size:5.7px">1150</div><div class="tb" style="left:626.8px;top:422.8px;font-size:5.7px">Front Hub</div><div class="tb" style="right:15.8px;top:422.8px;font-size:5.7px">500.00</div>
<div class="tb" style="left:552.2px;top:433.8px;font-size:5.7px">1200</div><div class="tb" style="left:626.8px;top:433.8px;font-size:5.7px">Back Wheel</div><div class="tb" style="right:15.8px;top:433.8px;font-size:5.7px">1,200.00</div>
<div class="a" style="left:915.8px;top:108.2px;width:8.2px;height:380.2px;background:#f0f0f0;border-left:0.6px solid #dadada"></div>
<div class="a" style="left:916.4px;top:116px;width:7.6px;height:211px;background:#dadada;border-right:0.8px solid #c4c4c4"></div>
<div class="a" style="left:916.6px;top:108.6px;width:7.4px;height:7.7px;background:#fff;border-top:0.6px solid #c8c8c8"></div>
<div class="a" style="left:916.6px;top:480px;width:7.4px;height:8.4px;background:#fff"></div>
<svg class="a" style="left:918px;top:111.4px;width:4.4px;height:2.8px" viewBox="0 0 4.4 2.8"><path d="M0.3 2.5 L2.2 0.5 L4.1 2.5" stroke="#555" stroke-width="0.8" fill="none"/></svg>
<svg class="a" style="left:918px;top:483px;width:4.4px;height:2.8px" viewBox="0 0 4.4 2.8"><path d="M0.3 0.3 L2.2 2.3 L4.1 0.3" stroke="#555" stroke-width="0.8" fill="none"/></svg>
<svg class="a" style="left:918.4px;top:220px;width:3.6px;height:4px" viewBox="0 0 3.6 4"><path d="M0 0.9 H3.6 M0 3.3 H3.6" stroke="#444" stroke-width="0.9"/></svg>
<!-- status bar -->
<div class="a" id="status"></div>
<div class="t" style="left:3.6px;top:492.4px;font-size:5.6px;color:#fff">CRONUS International Ltd.</div>
<div class="t" style="left:80.6px;top:492.4px;font-size:5.45px;color:#fff">01 January 2020</div>
<div class="t" style="left:128.2px;top:492.4px;font-size:5.6px;color:#fff">CCLEX\JMNAVISION</div>
<!-- taskbar -->
<div class="a" id="taskbar"></div>
<div class="a" style="left:203.5px;top:501px;width:30px;height:19px;background:#7fd0ee"></div>
<div class="a" style="left:233.5px;top:501px;width:29.8px;height:19px;background:#7fd0ee;border-left:0.7px solid #3a7f9c"></div>
<div class="a" style="left:263.3px;top:501px;width:28.2px;height:19px;background:#a6ddf3;border-left:0.7px solid #3a7f9c"></div>
<svg class="a" style="left:0;top:500.5px;width:300px;height:19.5px" viewBox="0 0 300 19.5">
<!-- windows logo -->
<path d="M6 5 L11.2 4.2 V9.6 H6Z M12 4.1 L17.9 3.2 V9.6 H12Z M6 10.4 H11.2 V15.8 L6 15Z M12 10.4 H17.9 V16.8 L12 15.9Z" fill="#fff"/>
<!-- server manager -->
<rect x="31" y="2.6" width="7.6" height="14" fill="#2f7fd1" stroke="#e8f3fb" stroke-width="0.7"/><path d="M32.4 5 H37.2 M32.4 7 H37.2" stroke="#bfe0f7" stroke-width="0.7"/>
<rect x="35" y="9.6" width="12" height="7.4" fill="#6b7f93" stroke="#f4f8fb" stroke-width="0.8"/><rect x="36" y="10.4" width="10" height="2.4" fill="#e6edf3"/>
<!-- powershell -->
<path d="M64.6 5 H76 L73.6 14.8 H62.4Z" fill="#2d6db5"/><path d="M66.4 6.8 L70 9.8 L65.6 13" stroke="#fff" stroke-width="1.1" fill="none"/><path d="M69.6 13 H73" stroke="#fff" stroke-width="1"/>
<!-- explorer -->
<path d="M91.2 4 H96.4 L97.6 5.2 H106.2 V16.6 H91.2Z" fill="#f2d36b"/><rect x="91.2" y="7.4" width="15" height="9.2" fill="#f7e08c"/><rect x="94.4" y="11" width="8.6" height="5.6" fill="#7db6e3"/><rect x="95.8" y="13.4" width="5.8" height="3.2" fill="#f4f8fb"/><circle cx="95.4" cy="4.6" r="0.9" fill="#58a55c"/><circle cx="99" cy="4.2" r="0.9" fill="#d4483b"/>
<!-- chrome -->
<circle cx="128.6" cy="9.9" r="6.8" fill="#db4437"/><path d="M128.6 9.9 L122.6 6.6 A6.8 6.8 0 0 0 128 16.7Z" fill="#0f9d58"/><path d="M128.6 9.9 L128 16.7 A6.8 6.8 0 0 0 134.8 6.9Z" fill="#f4c20d"/><path d="M128.6 9.9 L134.9 6.9 A6.8 6.8 0 0 0 122.5 6.7Z" fill="#db4437"/><circle cx="128.6" cy="9.9" r="3.2" fill="#fff"/><circle cx="128.6" cy="9.9" r="2.5" fill="#4285f4"/>
<!-- NAV white -->
<rect x="150.9" y="2.4" width="15.1" height="14.8" fill="#f4f8fc"/><path d="M152.6 15 L157 6 L158.6 10.4 L160.6 4.4 L161.6 15Z" fill="#1d5fae"/><path d="M161.8 15 L163 8.4 L164.4 15Z" fill="#1d5fae"/>
<!-- NAV dark -->
<rect x="180.5" y="2.4" width="15.3" height="14.8" fill="#0b2259"/><path d="M182.2 15 L186.6 6 L188.2 10.4 L190.2 4.4 L191.2 15Z" fill="#fff"/><path d="M191.6 15 L192.8 8.4 L194.2 15Z" fill="#fff"/>
<!-- dev env -->
<rect x="210" y="2.6" width="14.8" height="12.4" fill="#e9e4d8" stroke="#8a8f96" stroke-width="0.6"/><rect x="211" y="4.4" width="3" height="8.6" fill="#6f9fd6"/><path d="M215 16.4 L218.4 4.6 L220.4 16.4Z" fill="#e39a2d"/><path d="M218.4 16.4 L221.2 8.2 L222.8 16.4Z" fill="#5aa55a"/><path d="M221.6 16.4 L223.4 10.8 L224.6 16.4Z" fill="#3f7fc4"/>
<!-- NAV chart white -->
<rect x="241" y="2.4" width="14.7" height="14.8" fill="#f7fafd"/><rect x="243" y="11.4" width="2.8" height="4.4" fill="#1f6fc2"/><rect x="246.8" y="9.4" width="2.8" height="6.4" fill="#1f6fc2"/><rect x="250.6" y="6.6" width="2.8" height="9.2" fill="#1f6fc2"/><path d="M243 9.2 L253 3.8" stroke="#1f6fc2" stroke-width="1"/><circle cx="253.2" cy="3.8" r="1" fill="#1f6fc2"/>
<!-- NAV chart dark -->
<rect x="269.9" y="2.4" width="15.1" height="14.8" fill="#0b2259"/><rect x="272" y="11.4" width="2.8" height="4.4" fill="#fff"/><rect x="275.8" y="9.4" width="2.8" height="6.4" fill="#fff"/><rect x="279.6" y="6.6" width="2.8" height="9.2" fill="#fff"/><path d="M272 9.2 L282 3.8" stroke="#fff" stroke-width="1"/><circle cx="282.2" cy="3.8" r="1" fill="#fff"/>
</svg>
<div class="a" style="left:0;top:519.3px;width:924px;height:0.7px;background:#4f93ad"></div>
<!-- tray -->
<svg class="a" style="left:844.8px;top:504.4px;width:40px;height:12px" viewBox="0 0 40 12"><path d="M3.6 2 V10 M3.6 2 H8 V6 H3.6" stroke="#f4f4f4" stroke-width="0.9" fill="#e8eef2"/><circle cx="8.2" cy="8" r="2.2" fill="#c8322d"/><rect x="14.6" y="3" width="5.4" height="4.2" fill="#dfe8ee" stroke="#56646e" stroke-width="0.6"/><rect x="17" y="5" width="5" height="4" fill="#eef3f6" stroke="#56646e" stroke-width="0.6"/><path d="M26.4 4 L29 4 L31 2.2 V9.8 L29 8 H26.4Z" fill="#f2f2f2"/><circle cx="31.6" cy="8" r="2.2" fill="#c8322d"/></svg>
<div class="t" style="left:883px;width:36px;text-align:center;top:504.6px;font-size:5.6px;color:#111">15:28</div>
<div class="t" style="left:883px;width:36px;text-align:center;top:512.8px;font-size:5.6px;color:#111">23/03/2018</div>

<!-- red highlight rectangles -->
<svg class="a" style="left:0;top:0;width:924px;height:520px" viewBox="0 0 924 520"><g fill="none" stroke="#f4062a" stroke-width="2">
<rect x="5.2" y="11.8" width="74.8" height="66.2"/>
<rect x="810.2" y="27.4" width="112.9" height="28.2"/>
<rect x="71.15" y="454.9" width="32.9" height="36.9"/>
</g></svg>
</body></html>
